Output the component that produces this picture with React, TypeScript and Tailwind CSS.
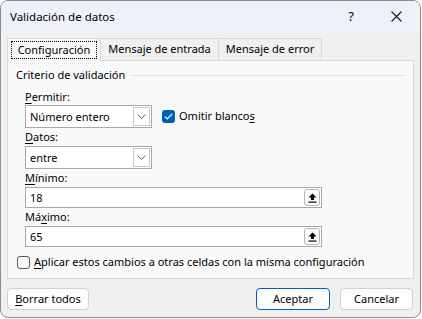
import React from "react";

// Excel "Validación de datos" dialog, Configuración tab

const Chevron = () => (
  <svg width="9" height="5" viewBox="0 0 9 5" fill="none">
    <path d="M0.5 0.5 L4.5 4.5 L8.5 0.5" stroke="#606060" strokeWidth="1" />
  </svg>
);

const UploadArrow = () => (
  <svg width="9" height="10" viewBox="0 0 9 10" fill="none">
    <path d="M4.5 0.5 L8.5 4.5 L6 4.5 L6 7 L3 7 L3 4.5 L0.5 4.5 Z" fill="#000" />
    <rect x="0.5" y="8.5" width="8" height="1.2" fill="#000" />
  </svg>
);

const Combo = ({ value }: { value: string }) => (
  <div className="flex h-[23px] w-[127px] items-center border border-[#a8a8a8] bg-white">
    <span className="flex-1 pl-[4px] leading-none">{value}</span>
    <div className="mr-px flex h-[19px] w-[17px] items-center justify-center border border-[#c8c8c8] bg-white">
      <Chevron />
    </div>
  </div>
);

const NumberInput = ({ value }: { value: string }) => (
  <div className="flex h-[21px] w-[297px] items-center border border-[#a8a8a8] bg-white">
    <span className="flex-1 pl-[4px] leading-none">{value}</span>
    <div className="mr-px flex h-[17px] w-[16px] items-center justify-center rounded-[3px] border border-[#b4b4b4] bg-[#fdfdfd]">
      <UploadArrow />
    </div>
  </div>
);

const Label = ({ pre, u, post }: { pre?: string; u: string; post?: string }) => (
  <div className="h-[18px] leading-[18px]">
    {pre}
    <span className="underline underline-offset-2">{u}</span>
    {post}
  </div>
);

export default function App() {
  return (
    <div className="h-[319px] w-[422px] bg-white font-['Noto_Sans',sans-serif] text-[11px] text-black">
      <div className="flex h-[318px] w-[421px] flex-col overflow-hidden rounded-[8px] border border-[#8c8c8c] bg-[#f0f0f0]">
        {/* Title bar */}
        <div className="flex h-[31px] items-center bg-[#eef2f8] pl-[9px]">
          <span className="flex-1 text-[11.5px]">Validación de datos</span>
          <span className="w-[46px] text-center text-[13px]">?</span>
          <span className="flex w-[46px] items-center justify-center pr-[2px]">
            <svg width="11" height="11" viewBox="0 0 11 11">
              <path d="M0.5 0.5 L10.5 10.5 M10.5 0.5 L0.5 10.5" stroke="#1a1a1a" strokeWidth="1.1" />
            </svg>
          </span>
        </div>

        {/* Tabs */}
        <div className="mt-[6px] flex pl-[6px]">
          <div className="relative z-10 -mb-px flex h-[23px] w-[94px] items-center justify-center border border-b-0 border-[#d9d9d9] bg-[#f9f9f9]">
            <div className="flex h-[18px] w-[86px] items-center justify-center border border-dotted border-black">
              Configuración
            </div>
          </div>
          <div className="flex h-[22px] w-[118px] items-center justify-center border border-l-0 border-b-0 border-[#d9d9d9]">
            Mensaje de entrada
          </div>
          <div className="flex h-[22px] w-[103px] items-center justify-center border border-l-0 border-b-0 border-[#d9d9d9]">
            Mensaje de error
          </div>
        </div>

        {/* Panel */}
        <div className="mx-[6px] h-[219px] border border-[#d9d9d9] bg-[#f9f9f9] pl-[8px] pr-[8px]">
          <div className="mt-[6px] flex h-[16px] items-center gap-[6px]">
            <span>Criterio de validación</span>
            <div className="h-px flex-1 bg-[#dcdcdc]" />
          </div>

          <div className="pl-[9px]">
            <div className="mt-[5px] h-[17px] leading-[17px]">
              <span className="underline underline-offset-2">P</span>ermitir:
            </div>
            <div className="flex items-center gap-[10px]">
              <Combo value="Número entero" />
              <div className="flex items-center gap-[4px]">
                <div className="flex h-[13px] w-[13px] items-center justify-center rounded-[3px] bg-[#005fb8]">
                  <svg width="9" height="7" viewBox="0 0 9 7" fill="none">
                    <path d="M0.8 3.6 L3.3 6 L8.2 0.8" stroke="#fff" strokeWidth="1.1" />
                  </svg>
                </div>
                <span>
                  Omitir blanco<span className="underline underline-offset-2">s</span>
                </span>
              </div>
            </div>

            <Label u="D" post="atos:" />
            <Combo value="entre" />

            <Label u="M" post="ínimo:" />
            <NumberInput value="18" />

            <Label pre="Má" u="x" post="imo:" />
            <NumberInput value="65" />
          </div>

          <div className="mt-[8px] flex h-[14px] items-center gap-[4px] pl-px">
            <div className="h-[13px] w-[13px] rounded-[3px] border border-[#5a5a5a] bg-[#f7f7f7]" />
            <span>
              <span className="underline underline-offset-2">A</span>plicar estos cambios a otras celdas con la misma configuración
            </span>
          </div>
        </div>

        {/* Buttons */}
        <div className="mt-[9px] flex items-center pl-[6px] pr-[7px]">
          <button className="h-[22px] w-[82px] rounded-[4px] border border-[#d0d0d0] bg-[#fdfdfd]">
            <span className="underline underline-offset-2">B</span>orrar todos
          </button>
          <div className="flex-1" />
          <button className="h-[22px] w-[74px] rounded-[4px] border border-[#005fb8] bg-[#fdfdfd]">
            Aceptar
          </button>
          <button className="ml-[10px] h-[22px] w-[73px] rounded-[4px] border border-[#d0d0d0] bg-[#fdfdfd]">
            Cancelar
          </button>
        </div>
      </div>
    </div>
  );
}
